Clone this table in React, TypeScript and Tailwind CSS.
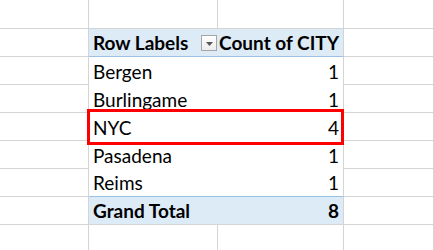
const rows = [
  { city: "Bergen", count: 1 },
  { city: "Burlingame", count: 1 },
  { city: "NYC", count: 4 },
  { city: "Pasadena", count: 1 },
  { city: "Reims", count: 1 },
]

const font = { fontFamily: "Lato, 'Liberation Sans', sans-serif" }

// one plain gridline cell
function Cell({ first }: { first?: boolean }) {
  return <div className={`${first ? "h-[29px]" : "h-[28px]"} border-b border-r border-[#d4d4d4]`} />
}

function DropButton() {
  return (
    <div className="w-4 h-4 border border-[#a6a6a6] bg-gradient-to-b from-white to-[#ececec] flex items-center justify-center">
      <svg width="7" height="4" viewBox="0 0 7 4" className="mt-[3px]">
        <path d="M0 0 H7 L3.5 4 Z" fill="#555555" />
      </svg>
    </div>
  )
}

export default function App() {
  return (
    <div className="relative w-[434px] h-[250px] overflow-hidden bg-white text-black" style={font}>
      <div className="grid grid-cols-[89px_129px_126px_1fr]">
        {/* top row */}
        <Cell first />
        <Cell first />
        <Cell first />
        <Cell first />

        {/* header */}
        <Cell />
        <div className="h-[28px] bg-[#ddebf7] border-b border-[#9bc2e6] flex items-center justify-between pl-1 pr-px">
          <span className="text-[19px] font-bold leading-none">Row Labels</span>
          <DropButton />
        </div>
        <div className="h-[28px] bg-[#ddebf7] border-b border-[#9bc2e6] border-r border-r-[#d4d4d4] flex items-center justify-end pr-1">
          <span className="text-[19px] font-bold leading-none whitespace-nowrap">Count of CITY</span>
        </div>
        <Cell />

        {rows.map((r, i) => (
          <div key={r.city} className="contents">
            <Cell />
            <div className={`h-[28px] bg-white flex items-center pl-1 ${i === rows.length - 1 ? "border-b border-[#9bc2e6]" : ""}`}>
              <span className="text-[19px] leading-none">{r.city}</span>
            </div>
            <div className={`h-[28px] bg-white border-r border-[#d4d4d4] flex items-center justify-end pr-1 ${i === rows.length - 1 ? "border-b border-b-[#9bc2e6]" : ""}`}>
              <span className="text-[19px] leading-none">{r.count}</span>
            </div>
            <Cell />
          </div>
        ))}

        {/* grand total */}
        <Cell />
        <div className="h-[28px] bg-[#ddebf7] border-b border-[#d4d4d4] flex items-center pl-1">
          <span className="text-[19px] font-bold leading-none">Grand Total</span>
        </div>
        <div className="h-[28px] bg-[#ddebf7] border-b border-r border-[#d4d4d4] flex items-center justify-end pr-1">
          <span className="text-[19px] font-bold leading-none">8</span>
        </div>
        <Cell />

        {/* bottom row */}
        <Cell />
        <Cell />
        <Cell />
        <Cell />
      </div>

      {/* highlight around NYC row */}
      <div className="absolute left-[87px] top-[109px] w-[257px] h-[36px] border-[3px] border-[#ff0000]" />
    </div>
  )
}
